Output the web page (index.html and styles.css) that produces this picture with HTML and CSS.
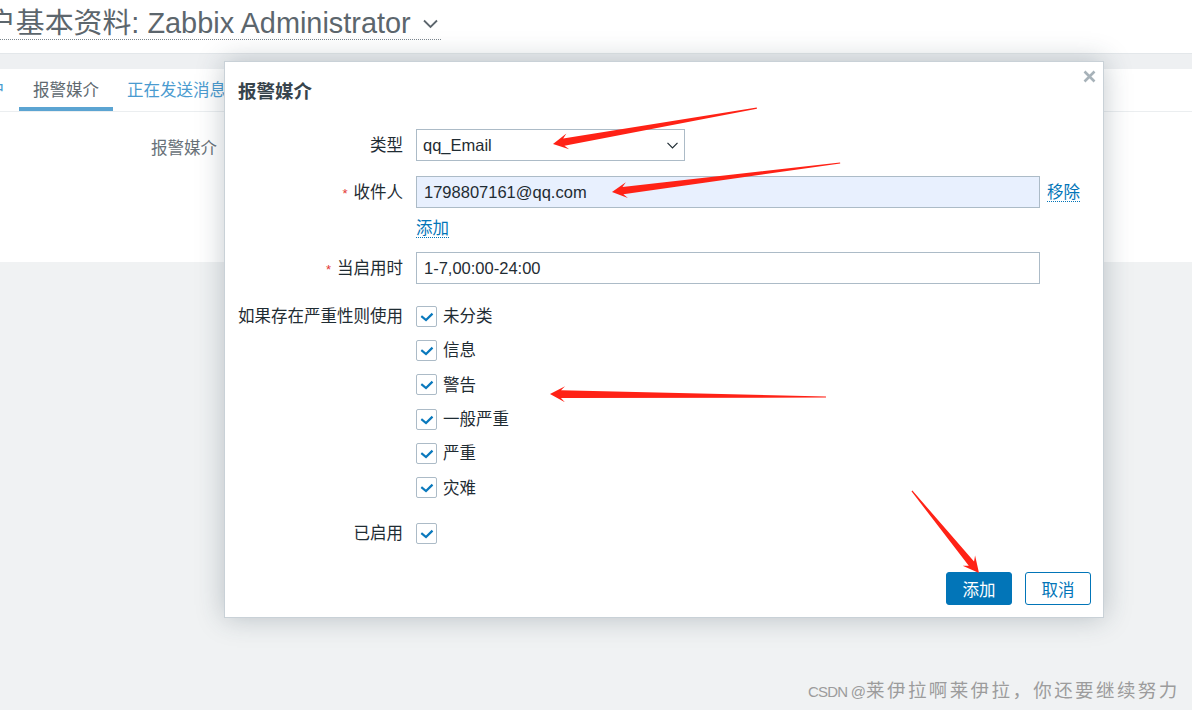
FILE: index.html
```html
<!DOCTYPE html>
<html lang="zh-CN">
<head>
<meta charset="utf-8">
<title>用户基本资料</title>
<link rel="stylesheet" href="styles.css">
</head>
<body>
<div class="page">
  <header class="page-header">
    <h1 class="page-title"><span>用户基本资料: Zabbix Administrator</span><svg class="title-caret" viewBox="0 0 15 10"><path d="M1 1.5 L7.5 8 L14 1.5" fill="none" stroke="#5c666d" stroke-width="1.8"/></svg></h1>
  </header>
  <div class="band"></div>
  <section class="tab-container">
    <nav class="tabs">
      <a class="tab">用户</a>
      <a class="tab active">报警媒介</a>
      <a class="tab">正在发送消息</a>
    </nav>
    <div class="tab-body">
      <div class="back-form">
        <div class="back-label">报警媒介</div>
        <div></div>
      </div>
    </div>
  </section>
</div>

<div class="modal">
  <h2 class="modal-title">报警媒介</h2>
  <svg class="modal-close" viewBox="0 0 13 13"><path d="M1.5 1.5 L11.5 11.5 M11.5 1.5 L1.5 11.5" stroke="#a7b2b9" stroke-width="2.6" fill="none"/></svg>
  <div class="form">
    <div class="row row-type">
      <div class="row-label">类型</div>
      <div class="field">
        <div class="select"><span>qq_Email</span><svg class="select-caret" viewBox="0 0 11 7"><path d="M0.5 0.8 L5.5 5.8 L10.5 0.8" fill="none" stroke="#1f2c33" stroke-width="1.2"/></svg></div>
      </div>
    </div>
    <div class="row row-to">
      <div class="row-label"><span class="req">*</span>收件人</div>
      <div class="field">
        <div class="recipient-line">
          <div class="input autofill">1798807161@qq.com</div>
          <span class="link-line"><a class="link">移除</a></span>
        </div>
        <div class="add-line"><a class="link">添加</a></div>
      </div>
    </div>
    <div class="row row-period">
      <div class="row-label"><span class="req">*</span>当启用时</div>
      <div class="field">
        <div class="input">1-7,00:00-24:00</div>
      </div>
    </div>
    <div class="row row-sev">
      <div class="row-label">如果存在严重性则使用</div>
      <div class="field checks">
        <div class="check"><span class="box"><svg viewBox="0 0 21 21"><path d="M5.3 10.2 L10 14 L16.5 7.6" fill="none" stroke="#0a79bd" stroke-width="2.2"/></svg></span>未分类</div>
        <div class="check"><span class="box"><svg viewBox="0 0 21 21"><path d="M5.3 10.2 L10 14 L16.5 7.6" fill="none" stroke="#0a79bd" stroke-width="2.2"/></svg></span>信息</div>
        <div class="check"><span class="box"><svg viewBox="0 0 21 21"><path d="M5.3 10.2 L10 14 L16.5 7.6" fill="none" stroke="#0a79bd" stroke-width="2.2"/></svg></span>警告</div>
        <div class="check"><span class="box"><svg viewBox="0 0 21 21"><path d="M5.3 10.2 L10 14 L16.5 7.6" fill="none" stroke="#0a79bd" stroke-width="2.2"/></svg></span>一般严重</div>
        <div class="check"><span class="box"><svg viewBox="0 0 21 21"><path d="M5.3 10.2 L10 14 L16.5 7.6" fill="none" stroke="#0a79bd" stroke-width="2.2"/></svg></span>严重</div>
        <div class="check"><span class="box"><svg viewBox="0 0 21 21"><path d="M5.3 10.2 L10 14 L16.5 7.6" fill="none" stroke="#0a79bd" stroke-width="2.2"/></svg></span>灾难</div>
      </div>
    </div>
    <div class="row row-enabled">
      <div class="row-label">已启用</div>
      <div class="field">
        <div class="check"><span class="box"><svg viewBox="0 0 21 21"><path d="M5.3 10.2 L10 14 L16.5 7.6" fill="none" stroke="#0a79bd" stroke-width="2.2"/></svg></span></div>
      </div>
    </div>
  </div>
  <div class="footer">
    <button class="btn btn-primary">添加</button>
    <button class="btn btn-secondary">取消</button>
  </div>
</div>

<svg class="annotations" width="1192" height="710" viewBox="0 0 1192 710">
  <g fill="#ff2216">
    <path transform="translate(553 144) rotate(170)" d="M0 0 L-15 -8 L-11 -3.6 L-207 -0.6 L-207 0.6 L-11 3.6 L-15 8 Z"/>
    <path transform="translate(612 192) rotate(172.75)" d="M0 0 L-15 -8 L-11 -3.6 L-230 -0.6 L-230 0.6 L-11 3.6 L-15 8 Z"/>
    <path transform="translate(550 394) rotate(180.62)" d="M0 0 L-15 -8 L-11 -3.8 L-276 -0.6 L-276 0.6 L-11 3.8 L-15 8 Z"/>
    <path transform="translate(979 573) rotate(50.75)" d="M0 0 L-16 -8 L-12 -3.4 L-106 -0.6 L-106 0.6 L-12 3.4 L-16 8 Z"/>
  </g>
</svg>

<div class="watermark"><span class="wm-latin">CSDN @</span><span class="wm-cjk">莱伊拉啊莱伊拉，你还要继续努力</span></div>
</body>
</html>
```

FILE: styles.css
```css
* { box-sizing: border-box; }
html, body { margin: 0; padding: 0; }
body {
  width: 1192px;
  height: 710px;
  overflow: hidden;
  position: relative;
  background: #f0f2f3;
  font-family: "Liberation Sans", "Noto Sans CJK SC", sans-serif;
  font-size: 16.5px;
  color: #1f2c33;
}

/* background page */
.page { margin-left: -42px; }
.page-header {
  height: 54px;
  background: #fff;
  border-bottom: 1px solid #e3e7ea;
}
.page-title {
  display: inline-flex;
  align-items: center;
  margin: 7px 0 0;
  font-size: 28.9px;
  font-weight: normal;
  line-height: 32px;
  color: #5c666d;
  border-bottom: 1px dotted #7b858c;
  padding-right: 3px;
}
.title-caret { width: 15px; height: 10px; margin-left: 12px; margin-top: 2px; }
.band { height: 15px; background: #eef0f2; }
.tab-container { background: #fff; }
.tabs {
  display: flex;
  height: 43px;
  border-bottom: 1px solid #ebeef0;
}
.tab {
  padding: 0 14px;
  line-height: 42px;
  height: 42px;
  color: #4a9bd0;
}
.tab.active {
  color: #60696f;
  box-shadow: inset 0 -4px 0 #5ba4d2;
}
.tab-body { height: 150px; padding-top: 24px; }
.back-form { display: grid; grid-template-columns: 259px 1fr; }
.back-label { text-align: right; line-height: 24px; color: #687178; }

/* modal */
.modal {
  position: absolute;
  left: 224px;
  top: 61px;
  width: 880px;
  height: 557px;
  background: #fff;
  border: 1px solid #c9d1d7;
  box-shadow: 0 0 26px rgba(40, 60, 75, 0.28);
  display: flex;
  flex-direction: column;
  padding: 0 12px 12px 13px;
}
.modal-title {
  margin: 0;
  height: 60px;
  line-height: 60px;
  font-size: 18.5px;
  font-weight: bold;
  color: #38444c;
}
.modal-close {
  position: absolute;
  top: 8px;
  right: 7px;
  width: 13px;
  height: 13px;
}
.form { padding-top: 7px; }
.row {
  display: grid;
  grid-template-columns: 165px 1fr;
  column-gap: 13px;
}
.row-label { text-align: right; line-height: 32px; white-space: nowrap; }
.req { color: #e33734; font-size: 13px; margin-right: 6px; }
.row-to { margin-top: 15px; }
.row-period { margin-top: 12px; }
.row-sev { margin-top: 13px; }
.row-sev .row-label { line-height: 34.3px; }
.row-enabled { margin-top: 12px; }
.row-enabled .row-label { line-height: 33px; }
.row-enabled .check { height: 33px; }

.select {
  width: 269px;
  height: 32px;
  border: 1px solid #acbbc7;
  display: flex;
  align-items: center;
  justify-content: space-between;
  padding: 0 6px;
}
.select-caret { width: 11px; height: 7px; }
.input {
  width: 624px;
  height: 32px;
  border: 1px solid #acbbc7;
  padding: 0 7px;
  display: flex;
  align-items: center;
}
.input.autofill { background: #e8f0fe; }
.recipient-line { display: flex; align-items: center; gap: 7px; }
.link-line { line-height: 32px; }
.add-line { margin-top: 8px; line-height: 24px; }
.link {
  color: #0275b8;
  text-decoration: none;
  border-bottom: 1px dotted #0275b8;
}

.checks { display: flex; flex-direction: column; }
.check {
  height: 34.3px;
  display: flex;
  align-items: center;
  gap: 6px;
  line-height: 24px;
}
.box {
  width: 21px;
  height: 21px;
  border: 1px solid #acbbc7;
  border-radius: 2px;
  background: #fff;
  display: flex;
  align-items: center;
  justify-content: center;
}
.box svg { width: 21px; height: 21px; display: block; flex: none; margin: -1px; }

.footer {
  margin-top: auto;
  display: flex;
  justify-content: flex-end;
  gap: 13px;
}
.btn {
  width: 66px;
  height: 33px;
  border-radius: 3px;
  border: 1px solid #0275b8;
  font: inherit;
  display: flex;
  align-items: center;
  justify-content: center;
  padding: 0;
}
.btn-primary { background: #0275b8; color: #fff; }
.btn-secondary { background: #fff; color: #0275b8; }

/* annotation overlay */
.annotations {
  position: absolute;
  left: 0;
  top: 0;
  pointer-events: none;
}

.watermark {
  position: absolute;
  left: 808px;
  top: 680px;
  line-height: 22px;
  color: #9c9c9c;
  white-space: nowrap;
}
.wm-latin { font-size: 15px; letter-spacing: -0.8px; }
.wm-cjk { font-size: 18.5px; letter-spacing: 2.4px; margin-left: 1px; }
```
